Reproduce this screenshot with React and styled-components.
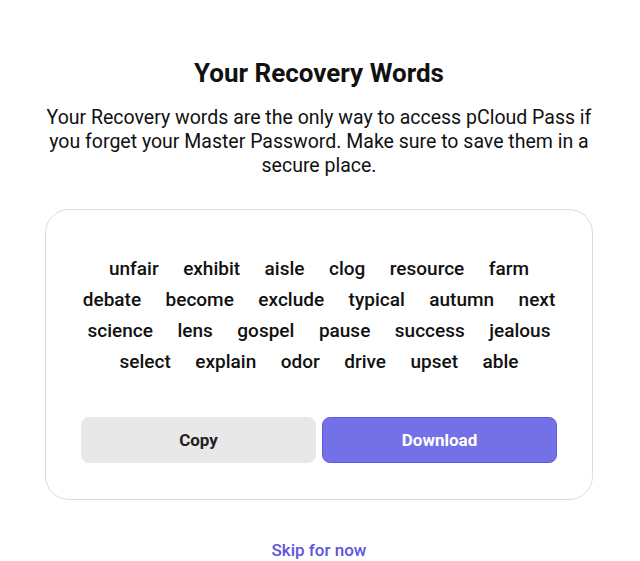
import React from 'react';
import styled, { createGlobalStyle } from 'styled-components';

const GlobalStyle = createGlobalStyle`
  body {
    margin: 0;
    background: #ffffff;
    font-family: Roboto, "Liberation Sans", sans-serif;
    color: #111111;
  }
`;

const Page = styled.div`
  width: 548px;
  margin: 0 auto;
  padding: 57px 2px 0 0;
  display: flex;
  flex-direction: column;
  align-items: center;
`;

const Title = styled.h1`
  margin: 0;
  font-size: 26px;
  font-weight: 700;
  line-height: 32px;
  color: #111111;
`;

const Intro = styled.p`
  margin: 17px 0 0;
  font-size: 19.5px;
  line-height: 24px;
  text-align: center;
  color: #111111;
`;

const Card = styled.div`
  box-sizing: border-box;
  width: 100%;
  margin-top: 31px;
  padding: 43px 35px 36px;
  border: 1px solid #dcdcdc;
  border-radius: 24px;
`;

const WordList = styled.div`
  display: flex;
  flex-wrap: wrap;
  justify-content: center;
  column-gap: 24.5px;
`;

const Word = styled.span`
  font-size: 19px;
  font-weight: 500;
  line-height: 31px;
  color: #111111;
`;

const Actions = styled.div`
  display: flex;
  gap: 6px;
  margin-top: 40px;
`;

const Button = styled.button`
  flex: 1;
  height: 46px;
  border-radius: 8px;
  font-family: Roboto, "Liberation Sans", sans-serif;
  font-size: 17px;
  font-weight: 700;
  cursor: pointer;
  border: 1px solid ${(p) => (p.$primary ? '#5f5ae6' : '#e8e8e8')};
  background: ${(p) => (p.$primary ? '#7470e6' : '#e8e8e8')};
  color: ${(p) => (p.$primary ? '#ffffff' : '#222222')};
`;

const Skip = styled.a`
  margin-top: 40px;
  font-size: 17px;
  font-weight: 500;
  color: #5b55e0;
  text-decoration: none;
  cursor: pointer;
`;

const words = [
  'unfair', 'exhibit', 'aisle', 'clog', 'resource', 'farm',
  'debate', 'become', 'exclude', 'typical', 'autumn', 'next',
  'science', 'lens', 'gospel', 'pause', 'success', 'jealous',
  'select', 'explain', 'odor', 'drive', 'upset', 'able',
];

const App = () => (
  <>
    <GlobalStyle />
    <Page>
      <Title>Your Recovery Words</Title>
      <Intro>
        Your Recovery words are the only way to access pCloud Pass if you forget your
        Master Password. Make sure to save them in a secure place.
      </Intro>
      <Card>
        <WordList>
          {words.map((w) => (
            <Word key={w}>{w}</Word>
          ))}
        </WordList>
        <Actions>
          <Button type="button">Copy</Button>
          <Button type="button" $primary>Download</Button>
        </Actions>
      </Card>
      <Skip>Skip for now</Skip>
    </Page>
  </>
);

export default App;
